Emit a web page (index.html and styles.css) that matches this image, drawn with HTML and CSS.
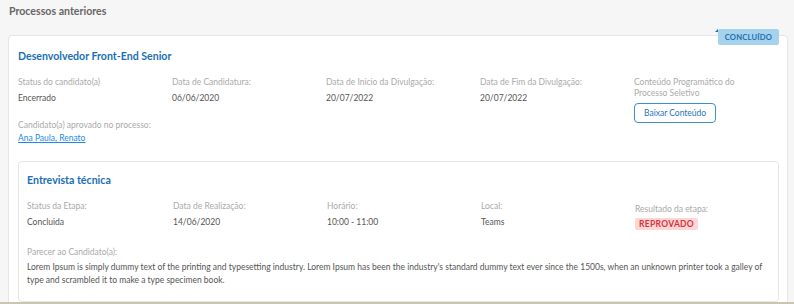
FILE: index.html
```html
<!DOCTYPE html>
<html lang="pt-BR">
<head>
  <meta charset="UTF-8">
  <meta name="viewport" content="width=device-width, initial-scale=1.0">
  <title>Processos anteriores</title>
  <link rel="stylesheet" href="styles.css">
</head>
<body>
  <h2 class="section-title">Processos anteriores</h2>

  <div class="process-card">
    <span class="ribbon">CONCLUÍDO</span>
    <h3 class="card-title">Desenvolvedor Front-End Senior</h3>

    <div class="fields">
      <div class="field">
        <span class="label">Status do candidato(a)</span>
        <span class="value">Encerrado</span>
      </div>
      <div class="field">
        <span class="label">Data de Candidatura:</span>
        <span class="value">06/06/2020</span>
      </div>
      <div class="field">
        <span class="label">Data de Inicio da Divulgação:</span>
        <span class="value">20/07/2022</span>
      </div>
      <div class="field">
        <span class="label">Data de Fim da Divulgação:</span>
        <span class="value">20/07/2022</span>
      </div>
      <div class="field download">
        <span class="label">Conteúdo Programático do<br>Processo Seletivo</span>
        <a class="btn-outline" href="#">Baixar Conteúdo</a>
      </div>
      <div class="field approved">
        <span class="label">Candidato(a) aprovado no processo:</span>
        <a class="link" href="#">Ana Paula, Renato</a>
      </div>
    </div>

    <div class="step-card">
      <h3 class="card-title">Entrevista técnica</h3>
      <div class="fields step-fields">
        <div class="field">
          <span class="label">Status da Etapa:</span>
          <span class="value">Concluida</span>
        </div>
        <div class="field">
          <span class="label">Data de Realização:</span>
          <span class="value">14/06/2020</span>
        </div>
        <div class="field">
          <span class="label">Horário:</span>
          <span class="value">10:00 - 11:00</span>
        </div>
        <div class="field">
          <span class="label">Local:</span>
          <span class="value">Teams</span>
        </div>
        <div class="field result">
          <span class="label">Resultado da etapa:</span>
          <span class="tag-fail">REPROVADO</span>
        </div>
      </div>
      <div class="opinion">
        <span class="label">Parecer ao Candidato(a):</span>
        <p class="text">Lorem Ipsum is simply dummy text of the printing and typesetting industry. Lorem Ipsum has been the industry's standard dummy text ever since the 1500s, when an unknown printer took a galley of type and scrambled it to make a type specimen book.</p>
      </div>
    </div>
  </div>
</body>
</html>
```

FILE: styles.css
```css
body {
  font-family: 'Lato', sans-serif;
  margin: 0;
  padding: 0 6px 0 8px;
  height: 304px;
  overflow: hidden;
  background-color: #f6f6f6;
  color: #555;
  font-size: 8.5px;
  box-sizing: border-box;
  border-bottom: 2px solid #c9c6b4;
}
.section-title {
  margin: 0;
  padding: 5px 0 0 1px;
  height: 35px;
  box-sizing: border-box;
  font-size: 10.6px;
  font-weight: 700;
  color: #666;
}
.process-card {
  position: relative;
  background-color: #fff;
  border: 1px solid #e6e6e6;
  border-radius: 4px;
  padding: 12px 8px 20px 9px;
}
.ribbon {
  position: absolute;
  top: -7px;
  right: 8px;
  background-color: #a6d2ee;
  color: #1b6fae;
  font-size: 7.6px;
  font-weight: 700;
  padding: 3px 7px;
  border-radius: 2px;
  letter-spacing: 0.2px;
}
.ribbon::before {
  content: '';
  position: absolute;
  top: 0;
  left: -3px;
  border-bottom: 3px solid #1b6fae;
  border-left: 3px solid transparent;
}
.card-title {
  margin: 0;
  font-size: 10.6px;
  font-weight: 700;
  color: #1a6fb5;
  line-height: 16px;
}
.fields {
  display: grid;
  grid-template-columns: repeat(5, 154px);
  row-gap: 16px;
  margin-top: 13px;
}
.field {
  display: flex;
  flex-direction: column;
  gap: 4px;
  align-items: flex-start;
}
.download {
  grid-column: 5;
  grid-row: 1 / span 2;
  gap: 0;
}
.approved {
  grid-column: 1 / span 3;
  grid-row: 2;
  gap: 1px;
}
.label {
  color: #aaa;
  line-height: 11px;
}
.value {
  color: #555;
  line-height: 12px;
}
.btn-outline {
  margin-top: 4px;
  padding: 3.5px 9px;
  border: 1.5px solid #3d8fd1;
  border-radius: 4px;
  color: #1f74bb;
  text-decoration: none;
  line-height: 11px;
}
.link {
  color: #1e88e5;
  line-height: 12px;
}
.step-card {
  margin-top: 17px;
  border: 1px solid #e6e6e6;
  border-radius: 4px;
  padding: 10px 8px 14px 8px;
}
.step-fields {
  grid-template-columns: 146px repeat(4, 154px);
  margin-top: 13px;
}
.result {
  padding-top: 3px;
  gap: 3px;
}
.tag-fail {
  background-color: #fdd6d6;
  color: #d8323c;
  font-weight: 700;
  padding: 1px 4px;
  border-radius: 2px;
  letter-spacing: 0.3px;
}
.opinion {
  margin-top: 17px;
}
.text {
  margin: 3px 0 0;
  line-height: 13px;
}
```
